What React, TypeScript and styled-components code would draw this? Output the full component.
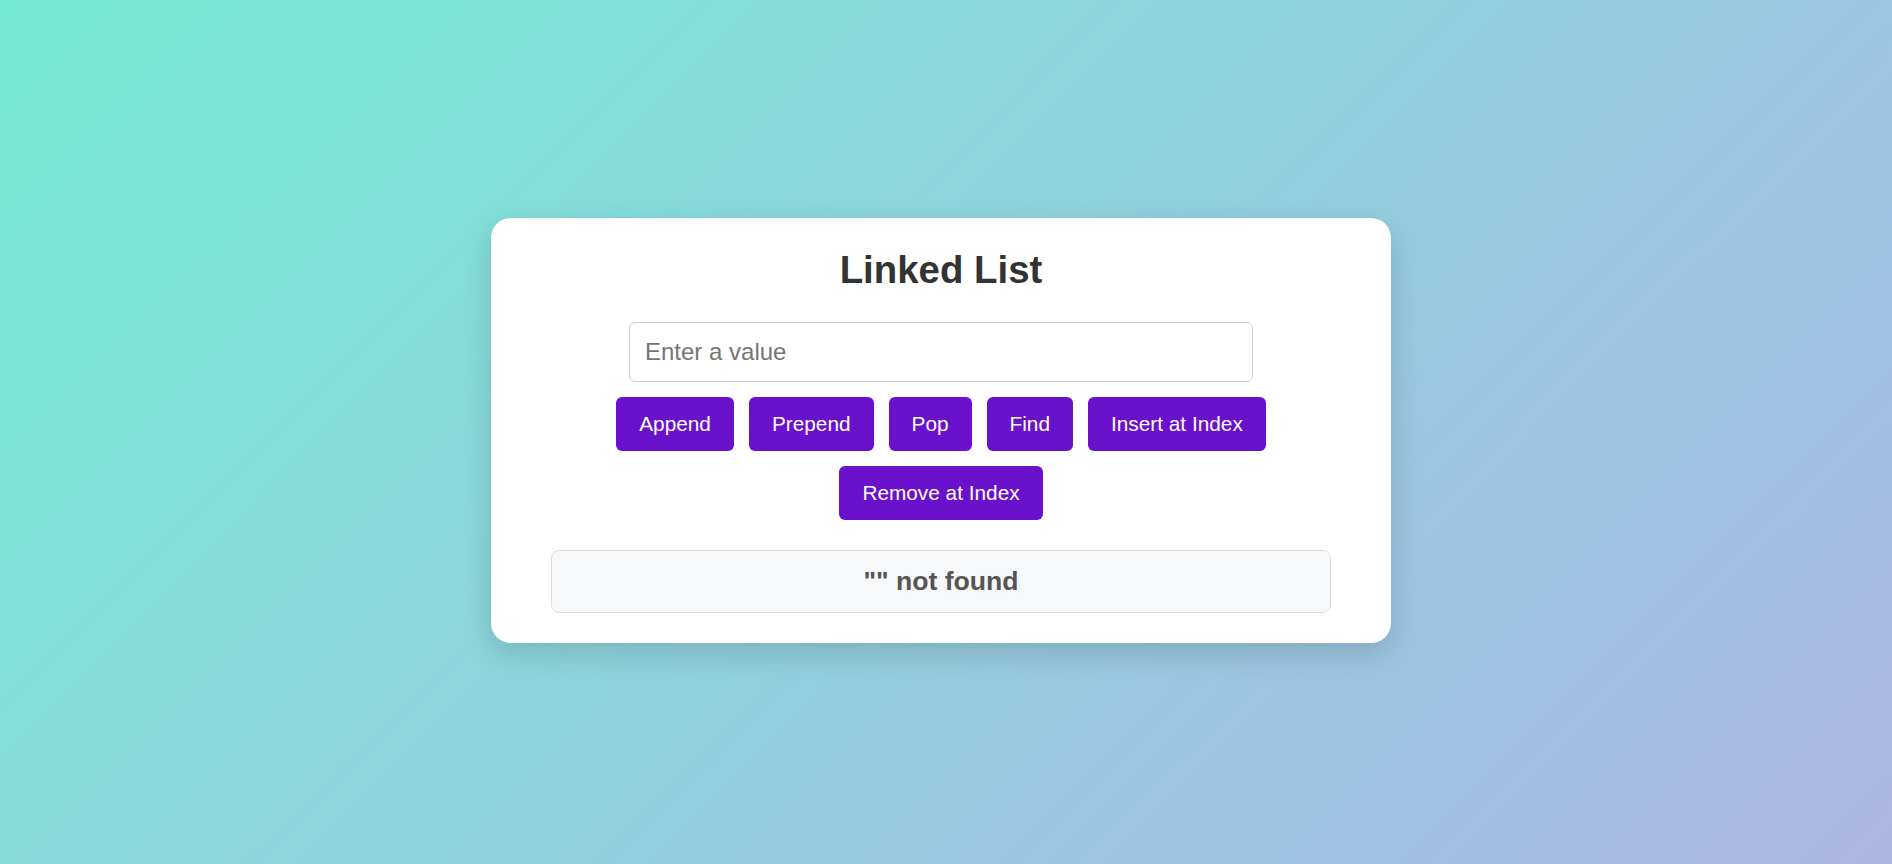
import React, { useState } from "react";
import styled, { createGlobalStyle } from "styled-components";

const GlobalStyle = createGlobalStyle`
  html, body {
    margin: 0;
    padding: 0;
  }
  body {
    font-family: "Liberation Sans", Arial, sans-serif;
    background: linear-gradient(135deg, #74ebd5 0%, #acb6e5 100%);
    min-height: 100vh;
  }
`;

const Page = styled.div`
  min-height: 100vh;
  display: flex;
  align-items: center;
  justify-content: center;
  padding: 0 10px 3px 0;
  box-sizing: border-box;
`;

const Card = styled.div`
  width: 900px;
  box-sizing: border-box;
  background: #ffffff;
  border-radius: 20px;
  padding: 30px 60px;
  box-shadow: 0 10px 30px rgba(0, 0, 0, 0.15);
  display: flex;
  flex-direction: column;
  align-items: center;
`;

const Title = styled.h1`
  margin: 0 0 30px;
  font-size: 38.4px;
  font-weight: bold;
  color: #333333;
  line-height: normal;
`;

const Input = styled.input`
  width: 80%;
  box-sizing: border-box;
  padding: 15px;
  font-size: 24px;
  font-family: "Liberation Sans", Arial, sans-serif;
  border: 1px solid #cccccc;
  border-radius: 6px;
  outline: none;
  color: #333;
  &::placeholder {
    color: #757575;
  }
`;

const ButtonRow = styled.div`
  display: flex;
  flex-wrap: wrap;
  justify-content: center;
  gap: 15px;
  margin-top: 15px;
  width: 100%;
`;

const ActionButton = styled.button`
  background: #6a11cb;
  color: #ffffff;
  border: none;
  border-radius: 6px;
  padding: 15px 23px;
  font-size: 20.8px;
  font-family: "Liberation Sans", Arial, sans-serif;
  line-height: normal;
  cursor: pointer;
`;

const Result = styled.div`
  width: 100%;
  box-sizing: border-box;
  margin-top: 30px;
  padding: 15px;
  background: #f7f8fa;
  border: 1px solid #dddddd;
  border-radius: 8px;
  text-align: center;
  font-size: 26.6px;
  font-weight: bold;
  color: #555555;
  line-height: normal;
`;

const actions = [
  "Append",
  "Prepend",
  "Pop",
  "Find",
  "Insert at Index",
  "Remove at Index",
];

export default function App() {
  const [value, setValue] = useState("");
  return (
    <>
      <GlobalStyle />
      <Page>
        <Card>
          <Title>Linked List</Title>
          <Input
            placeholder="Enter a value"
            value={value}
            onChange={(e) => setValue(e.target.value)}
          />
          <ButtonRow>
            {actions.map((a) => (
              <ActionButton key={a}>{a}</ActionButton>
            ))}
          </ButtonRow>
          <Result>"" not found</Result>
        </Card>
      </Page>
    </>
  );
}
